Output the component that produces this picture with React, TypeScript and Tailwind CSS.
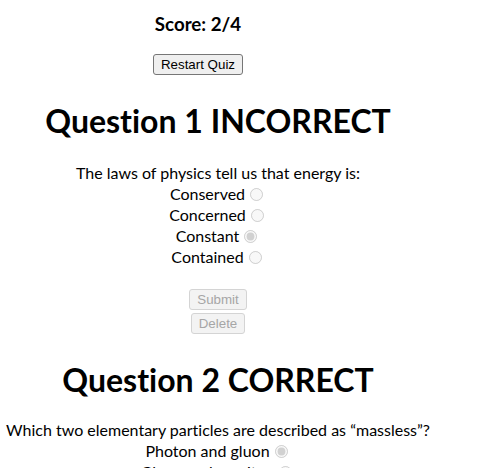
import React from 'react';

type Option = { label: string; checked?: boolean };

type Question = {
  title: string;
  text: string;
  options: Option[];
  showButtons?: boolean;
};

const questions: Question[] = [
  {
    title: 'Question 1 INCORRECT',
    text: 'The laws of physics tell us that energy is:',
    options: [
      { label: 'Conserved' },
      { label: 'Concerned' },
      { label: 'Constant', checked: true },
      { label: 'Contained' },
    ],
    showButtons: true,
  },
  {
    title: 'Question 2 CORRECT',
    text: 'Which two elementary particles are described as \u201cmassless\u201d?',
    options: [
      { label: 'Photon and gluon', checked: true },
      { label: 'Gluon and graviton' },
      { label: 'Photon and graviton' },
    ],
  },
];

const btn =
  "px-[7px] py-[2px] border rounded-[3px] text-[13.33px] leading-[15px] font-['Liberation_Sans',Arial,sans-serif]";

const QuestionBlock = ({ q, idx }: { q: Question; idx: number }) => (
  <div className={idx === 0 ? 'mt-[26px]' : 'mt-[26px]'}>
    <h1 className="text-[32px] font-bold leading-[40px]">{q.title}</h1>
    <p className={`${idx === 0 ? 'mt-[21px]' : 'mt-[19px]'} leading-[21px]`}>{q.text}</p>
    {q.options.map((o) => (
      <div key={o.label} className="leading-[21px]">
        {o.label}
        <input
          type="radio"
          name={`q${idx}`}
          disabled
          defaultChecked={o.checked}
          className="ml-[5px] mr-[3px] align-[-1px]"
        />
      </div>
    ))}
    {q.showButtons && (
      <div className="mt-[22px] flex flex-col items-center gap-[3px]">
        <button disabled className={`${btn} bg-[#f3f3f3] border-[#d4d4d4] text-[#a6a6a6]`}>
          Submit
        </button>
        <button disabled className={`${btn} bg-[#f3f3f3] border-[#d4d4d4] text-[#a6a6a6]`}>
          Delete
        </button>
      </div>
    )}
  </div>
);

export default function App() {
  return (
    <div className="min-h-screen bg-white text-black text-[16px] font-['Lato','Noto_Sans',sans-serif] [font-variant-ligatures:none] overflow-hidden">
      <div className="w-[396px] text-center pt-[12px]">
        <h3 className="text-[18.72px] font-bold leading-[25px]">Score: 2/4</h3>
        <button className={`${btn} mt-[17px] bg-[#efefef] border-[#767676] text-black`}>
          Restart Quiz
        </button>
      </div>
      <div className="w-[436px] text-center">
        {questions.map((q, i) => (
          <QuestionBlock key={q.title} q={q} idx={i} />
        ))}
      </div>
    </div>
  );
}
